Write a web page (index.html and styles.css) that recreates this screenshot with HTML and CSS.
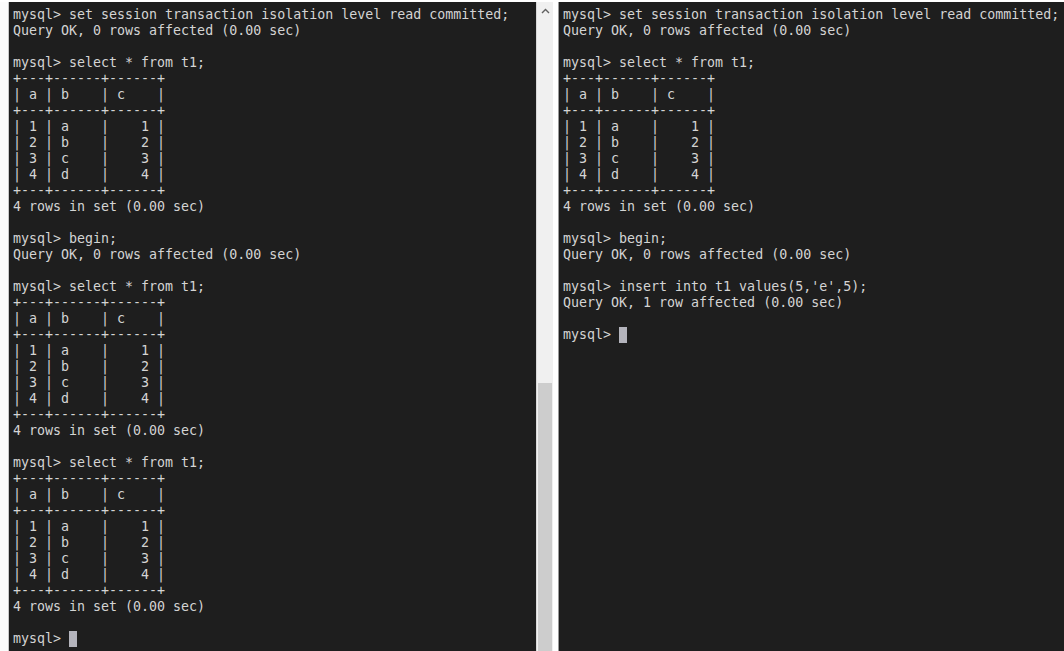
FILE: index.html
```html
<!DOCTYPE html>
<html>
<head>
<meta charset="utf-8">
<link rel="stylesheet" href="styles.css">
</head>
<body>
<div class="screen">
  <div class="edge"></div>
  <div class="pane left">
<pre class="term">mysql&gt; set session transaction isolation level read committed;
Query OK, 0 rows affected (0.00 sec)

mysql&gt; select * from t1;
+---+------+------+
| a | b    | c    |
+---+------+------+
| 1 | a    |    1 |
| 2 | b    |    2 |
| 3 | c    |    3 |
| 4 | d    |    4 |
+---+------+------+
4 rows in set (0.00 sec)

mysql&gt; begin;
Query OK, 0 rows affected (0.00 sec)

mysql&gt; select * from t1;
+---+------+------+
| a | b    | c    |
+---+------+------+
| 1 | a    |    1 |
| 2 | b    |    2 |
| 3 | c    |    3 |
| 4 | d    |    4 |
+---+------+------+
4 rows in set (0.00 sec)

mysql&gt; select * from t1;
+---+------+------+
| a | b    | c    |
+---+------+------+
| 1 | a    |    1 |
| 2 | b    |    2 |
| 3 | c    |    3 |
| 4 | d    |    4 |
+---+------+------+
4 rows in set (0.00 sec)

mysql&gt; <span class="cursor"> </span></pre>
  </div>
  <div class="scrollbar">
    <div class="arrow">
      <svg width="9" height="6" viewBox="0 0 9 6"><path d="M1 5 L4.5 1.5 L8 5" fill="none" stroke="#606060" stroke-width="1.4"/></svg>
    </div>
    <div class="track"><div class="thumb"></div></div>
  </div>
  <div class="gap"></div>
  <div class="pane right">
<pre class="term">mysql&gt; set session transaction isolation level read committed;
Query OK, 0 rows affected (0.00 sec)

mysql&gt; select * from t1;
+---+------+------+
| a | b    | c    |
+---+------+------+
| 1 | a    |    1 |
| 2 | b    |    2 |
| 3 | c    |    3 |
| 4 | d    |    4 |
+---+------+------+
4 rows in set (0.00 sec)

mysql&gt; begin;
Query OK, 0 rows affected (0.00 sec)

mysql&gt; insert into t1 values(5,'e',5);
Query OK, 1 row affected (0.00 sec)

mysql&gt; <span class="cursor"> </span></pre>
  </div>
</div>
</body>
</html>
```
FILE: styles.css
```css
html, body {
  margin: 0;
  padding: 0;
  background: #ffffff;
  height: 100%;
  overflow: hidden;
}
.screen {
  display: flex;
  height: 651px;
  padding-top: 2px;
  box-sizing: border-box;
}
.edge {
  width: 8px;
  border-right: 1px solid #c8c8c8;
  background: #fbfbfb;
}
.pane {
  background: #1e1e1e;
  height: 100%;
  overflow: hidden;
  box-sizing: border-box;
  padding-top: 5px;
}
.pane.left {
  width: 527px;
  padding-left: 4px;
}
.pane.right {
  flex: 1;
  padding-left: 4px;
  border-left: 1px solid #9a9a9a;
}
.term {
  margin: 0;
  font-family: "DejaVu Sans Mono", "Liberation Mono", monospace;
  font-size: 13.3px;
  line-height: 16px;
  color: #d4d4d4;
  white-space: pre;
}
.cursor {
  display: inline-block;
  width: 8px;
  height: 16px;
  background: #b4b4bc;
  vertical-align: top;
}
.scrollbar {
  width: 16px;
  display: flex;
  flex-direction: column;
  background: #f0f0f0;
  border-left: 1px solid #d8d8d8;
}
.arrow {
  height: 17px;
  display: flex;
  align-items: center;
  justify-content: center;
}
.track {
  flex: 1;
  display: flex;
  flex-direction: column;
  padding: 0 1px;
}
.thumb {
  margin-top: 364px;
  flex: 1;
  background: #cdcdcd;
}
.gap {
  width: 5px;
  background: #ffffff;
}
```
